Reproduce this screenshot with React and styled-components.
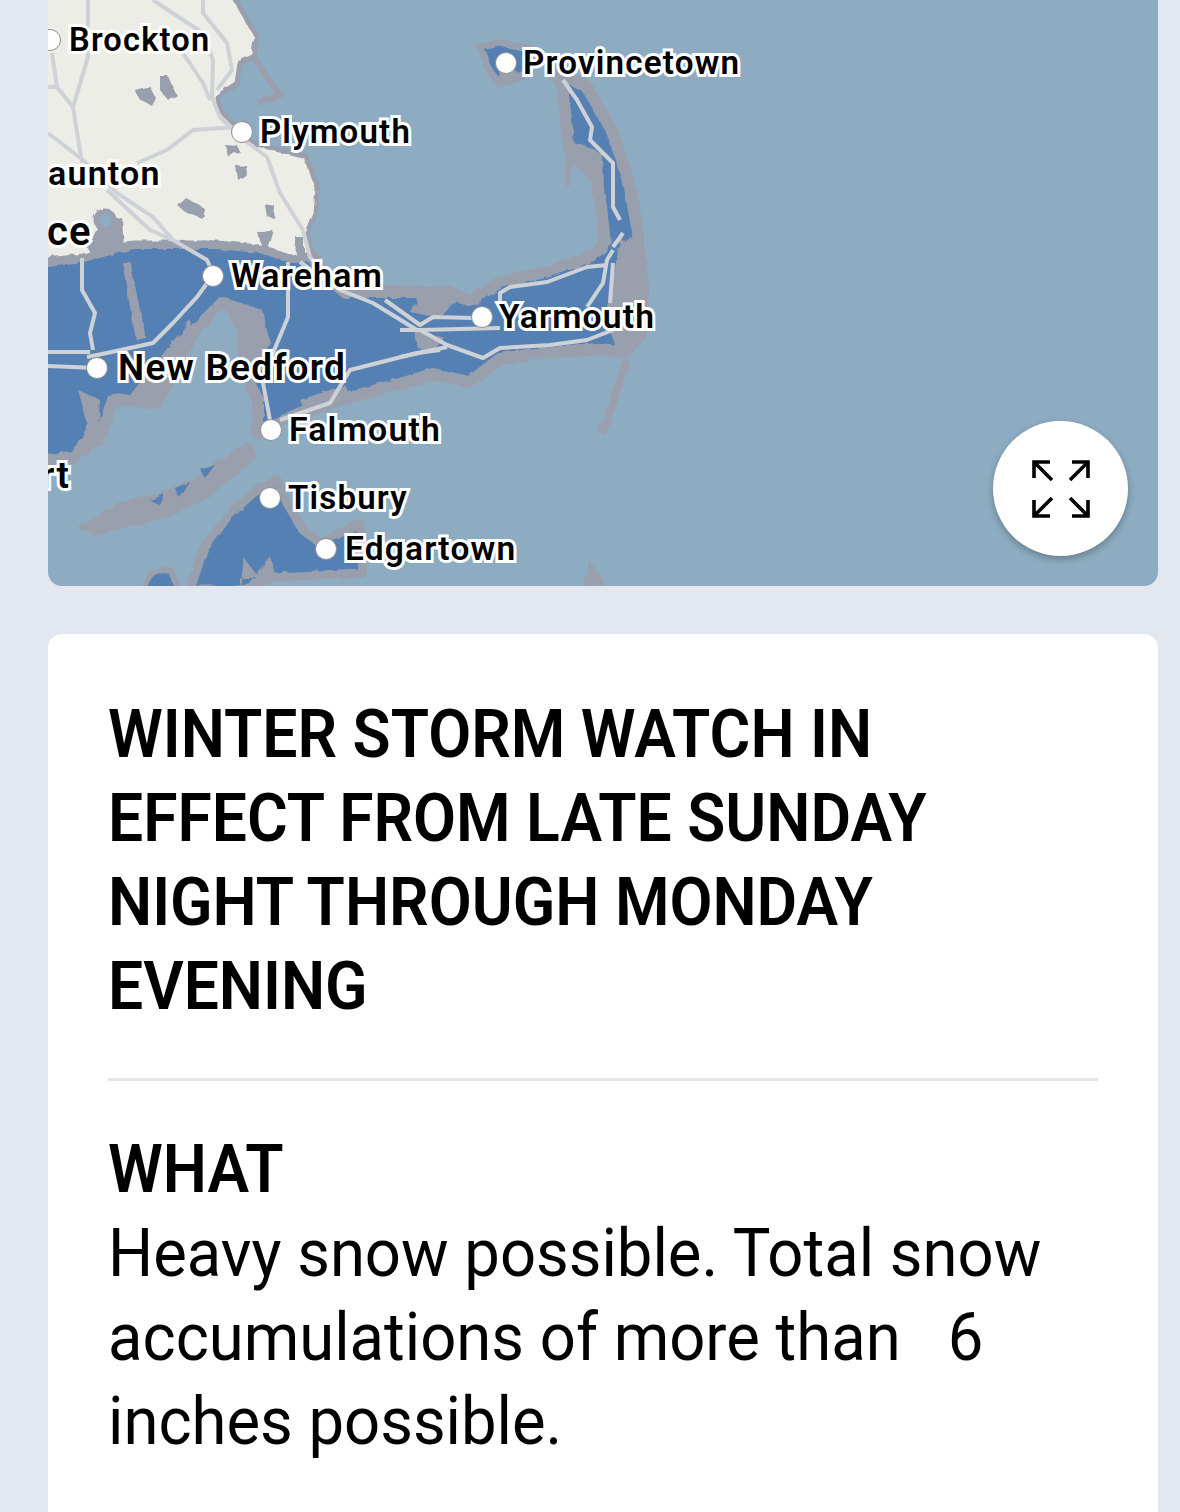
import React from "react";
import styled, { createGlobalStyle } from "styled-components";

const GlobalStyle = createGlobalStyle`
  html, body {
    margin: 0;
    background-color: #e2e7f0;
  }
`;

const Page = styled.div`
  height: 1512px;
  overflow: hidden;
  padding: 0 22px 0 48px;
  display: flex;
  flex-direction: column;
  gap: 48px;
  font-family: Roboto, "Liberation Sans", sans-serif;
  color: #000;
`;

const MapBox = styled.div`
  position: relative;
  flex: none;
  height: 586px;
  overflow: hidden;
  background-color: #8dacc1;
  border-radius: 0 0 14px 14px;
`;

const MapArt = styled.svg`
  display: block;
  width: 1110px;
  height: 586px;
`;

const Place = styled.span`
  position: absolute;
  left: ${(p) => p.$x - 48}px;
  top: ${(p) => p.$y}px;
  font-size: ${(p) => p.$size || 33}px;
  line-height: 40px;
  font-weight: 600;
  letter-spacing: 1.2px;
  white-space: nowrap;
  -webkit-text-stroke: 6px #fff;
  paint-order: stroke fill;
  transform: translateY(-50%);
`;

const Pin = styled.i`
  position: absolute;
  left: ${(p) => p.$x - 48 - 11}px;
  top: ${(p) => p.$y - 11}px;
  width: 22px;
  height: 22px;
  box-sizing: border-box;
  border-radius: 50%;
  background-color: #fff;
  border: 1px solid #8f8f8f;
`;

const ExpandButton = styled.button`
  position: absolute;
  right: 30px;
  bottom: 30px;
  width: 135px;
  height: 135px;
  padding: 0;
  border: 0;
  border-radius: 50%;
  background-color: #fff;
  box-shadow: 0 3px 7px rgba(0, 0, 0, 0.28);
  display: flex;
  align-items: center;
  justify-content: center;
`;

const Card = styled.section`
  flex: none;
  height: 1000px;
  background-color: #fff;
  border-radius: 14px;
  padding: 59px 60px 0;
`;

const Title = styled.h1`
  margin: 0;
  font-size: 66px;
  line-height: 84px;
  font-weight: 600;
  text-transform: uppercase;
  white-space: nowrap;
  transform: scaleX(0.945);
  transform-origin: left;
`;

const Divider = styled.hr`
  margin: 49px 0 0;
  height: 3px;
  border: 0;
  background-color: #e5e5e5;
`;

const SectionName = styled.h2`
  margin: 47px 0 0;
  font-size: 66px;
  line-height: 84px;
  font-weight: 600;
  transform: scaleX(0.945);
  transform-origin: left;
`;

const SectionText = styled.p`
  margin: 0;
  font-size: 66px;
  line-height: 84px;
  font-weight: 400;
  white-space: pre;
  transform: scaleX(0.96);
  transform-origin: left;
`;

const places = [
  { name: "Brockton", x: 69, y: 40, pinX: 50, size: 32.6 },
  { name: "Provincetown", x: 523, y: 63, pinX: 506, size: 33.2 },
  { name: "Plymouth", x: 260, y: 132, pinX: 242 },
  { name: "aunton", x: 48, y: 173, size: 34 },
  { name: "ce", x: 47, y: 232, size: 40 },
  { name: "Wareham", x: 231, y: 276, pinX: 213, size: 33.8 },
  { name: "Yarmouth", x: 499, y: 317, pinX: 482, size: 33.6 },
  { name: "New Bedford", x: 118, y: 368, pinX: 97, size: 37 },
  { name: "Falmouth", x: 289, y: 430, pinX: 271, size: 33.8 },
  { name: "rt", x: 41, y: 476, size: 37 },
  { name: "Tisbury", x: 288, y: 498, pinX: 270 },
  { name: "Edgartown", x: 345, y: 549, pinX: 326, size: 33.5 },
];

const roads = [
  "M88 0V57L73 107L82 163",
  "M48 87H57L73 107",
  "M52 53L57 87",
  "M153 0L203 33L213 60L212 97L220 117L240 137L267 157L280 193L303 230L310 257L322 272",
  "M203 0V13L227 43L232 70L217 90",
  "M183 53L203 83L210 100",
  "M137 163L167 150L193 130L237 127",
  "M48 133L83 160L117 193L153 217L173 240L207 260L213 273",
  "M107 190L150 230L173 240",
  "M213 275L197 297L173 323L153 343L107 353L87 357",
  "M48 352H90",
  "M48 366L96 368",
  "M82 258V290L95 313L90 333L93 350",
  "M288 262V317L273 353L263 383L270 420",
  "M300 262L340 290L373 303L417 330",
  "M280 420L330 403L350 370L417 353L440 350",
  "M400 330H420L500 328",
  "M385 300L420 325L433 317L472 318",
  "M420 330L447 345L483 358L500 348L550 345L587 340L613 330",
  "M447 347L400 357",
  "M500 307V293L510 287L547 282L587 267L607 265",
  "M587 307L603 283L607 260L613 250",
  "M610 303L613 263",
  "M563 80L577 100L592 127L590 140L613 163V207L620 220",
  "M613 247L623 233",
];

const ponds = [
  "M135 90L150 86L156 98L152 106L140 100Z",
  "M160 76L168 76L176 94L168 100L160 90Z",
  "M225 145L238 146L240 153L228 156Z",
  "M236 166L246 165L247 174L238 180Z",
  "M178 206L186 198L204 208L202 218L186 212Z",
  "M264 204L275 206L274 218L266 216Z",
  "M258 233L274 230L268 250L262 248Z",
  "M295 236H304V258H296Z",
];

const Header = () => (
  <MapBox>
    <MapArt viewBox="48 0 1110 586">
      <defs>
        <filter id="rough" x="-5%" y="-5%" width="110%" height="110%">
          <feTurbulence type="fractalNoise" baseFrequency="0.1" numOctaves="2" seed="4" />
          <feDisplacementMap in="SourceGraphic" scale="5" />
        </filter>
      </defs>
      <g filter="url(#rough)">
        <path
          d="M30 262L83 256L133 243H217L260 247L293 257L312 256L322 274L345 292L400 292L450 292L470 301L500 282L550 271L593 255L605 243L601 207L598 190L597 158L580 150L568 147L566 120L562 87L553 70L587 87L613 133L630 187L638 233L643 287L641 335L625 352L600 349L550 352L500 359L470 382L433 374L400 384L350 397L303 412L273 425L258 434L258 400L250 385L262 340L258 315L222 303L192 333L183 353L157 403L113 400L100 437L73 457L30 462Z"
          fill="#5580b4"
          stroke="#9a9fae"
          strokeWidth="12"
          strokeLinejoin="round"
        />
        <path d="M620 240L642 235L646 340L618 352L606 320Z" fill="#9a9fae" />
        <path d="M572 150L600 156L600 190L580 170L572 162Z" fill="#9a9fae" />
        <path d="M566 150L574 150L570 186L564 186Z" fill="#9a9fae" />
        <path d="M222 303L262 315L270 340L255 385L240 370L236 330Z" fill="#9a9fae" />
        <path d="M192 333L183 353L157 403L130 395L170 345L190 320Z" fill="#9a9fae" />
        <path d="M420 292L460 296L440 318L410 312Z" fill="#9a9fae" />
        <path d="M414 330L445 338L435 352L418 348Z" fill="#9a9fae" />
        <path d="M122 262L130 262L146 338L136 340Z" fill="#9a9fae" />
        <path d="M78 390L100 400L98 436L74 452L88 425Z" fill="#9a9fae" />
        <path d="M300 400L345 385L350 395L305 412Z" fill="#9a9fae" />
        <path
          d="M30 -10H230L257 37L253 57L240 63L237 83L217 97L220 110L237 127L253 143L307 157L317 187L315 213L307 233L313 253L293 258L260 247L217 243H133L83 256L30 262Z"
          fill="#ecede6"
          stroke="#9a9fae"
          strokeWidth="5"
          strokeLinejoin="round"
        />
        <path d="M253 57L280 95L258 103" fill="none" stroke="#9a9fae" strokeWidth="6" />
        {ponds.map((d) => (
          <path key={d} d={d} fill="#9a9fae" />
        ))}
        <path d="M100 222L122 218L124 250L92 260L88 248Z" fill="#9a9fae" />
        <circle cx="105" cy="220" r="9" fill="#8dacc1" stroke="#9a9fae" strokeWidth="5" />
        <path d="M480 47L500 43L533 50L530 70L512 82L500 84L490 72Z" fill="#5580b4" stroke="#9a9fae" strokeWidth="7" />
        <path d="M500 70L518 72L512 84L498 82Z" fill="#9a9fae" />
        <path d="M87 527L125 505L160 498L195 482L247 447L252 455L205 495L170 512L130 522L95 530Z" fill="#9a9fae" stroke="#9a9fae" strokeWidth="9" />
        <path d="M150 500L165 494L160 505ZM175 488L190 482L180 498ZM200 470L215 465L205 478Z" fill="#5580b4" />
        <path d="M190 590L203 550L227 517L253 493L277 480L287 503L303 530L320 543L360 523L363 573L273 577L240 590Z" fill="#5580b4" stroke="#9a9fae" strokeWidth="9" strokeLinejoin="round" />
        <path d="M150 573L170 570L180 590H145Z" fill="#5580b4" stroke="#9a9fae" strokeWidth="6" />
        <path d="M240 590L244 558L256 574L270 556L276 578H240Z" fill="#9a9fae" />
        <path d="M584 586L590 560L606 586Z" fill="#9a9fae" />
        <path d="M627 360L615 395L608 420L600 432" fill="none" stroke="#9a9fae" strokeWidth="8" />
      </g>
      {roads.map((d) => (
        <path key={d} d={d} fill="none" stroke="#ced2d6" strokeWidth="4" strokeLinejoin="round" />
      ))}
    </MapArt>
    {places.map((place) => (
      <React.Fragment key={place.name}>
        {place.pinX && <Pin $x={place.pinX} $y={place.y} />}
        <Place $x={place.x} $y={place.y} $size={place.size}>
          {place.name}
        </Place>
      </React.Fragment>
    ))}
    <ExpandButton aria-label="Expand map">
      <svg width="60" height="60" viewBox="0 0 60 60" fill="none" stroke="#000" strokeWidth="3.6">
        <path d="M19 3H3V19M3 3L21 21" />
        <path d="M41 3H57V19M57 3L39 21" />
        <path d="M3 41V57H19M3 57L21 39" />
        <path d="M41 57H57V41M57 57L39 39" />
      </svg>
    </ExpandButton>
  </MapBox>
);

const App = () => {
  return (
    <>
      <GlobalStyle />
      <Page>
        <Header />
        <Card>
          <Title>
            Winter storm watch in
            <br />
            effect from late Sunday
            <br />
            night through Monday
            <br />
            evening
          </Title>
          <Divider />
          <SectionName>WHAT</SectionName>
          <SectionText>
            {"Heavy snow possible. Total snow\naccumulations of more than   6\ninches possible."}
          </SectionText>
        </Card>
      </Page>
    </>
  );
};

export default App;
